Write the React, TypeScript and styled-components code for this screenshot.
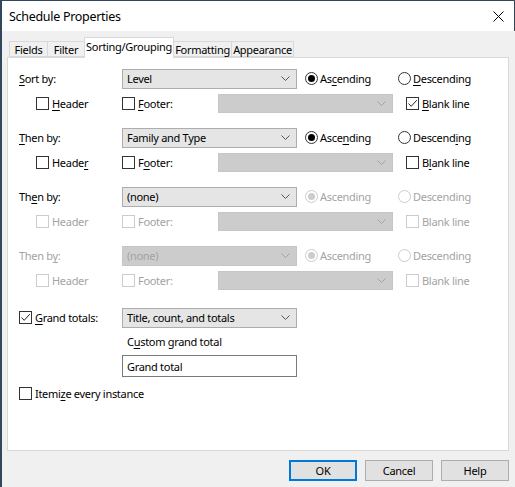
import React from "react";
import styled, { createGlobalStyle } from "styled-components";

const GlobalStyle = createGlobalStyle`
  html, body {
    margin: 0;
    padding: 0;
    background: #f0f0f0;
  }
  body {
    font-family: "Noto Sans", "Open Sans", sans-serif;
    font-size: 11px;
    letter-spacing: -0.3px;
    color: #000;
  }
`;

const Window = styled.div`
  width: 515px;
  height: 487px;
  box-sizing: border-box;
  background: #f0f0f0;
  border-left: 2px solid #33475c;
  display: flex;
  flex-direction: column;
`;

const TitleBar = styled.div`
  height: 31px;
  background: #fff;
  border-top: 1px solid #33475c;
  border-right: 1px solid #33475c;
  display: flex;
  align-items: center;
  justify-content: space-between;
  padding: 0 10px 0 7px;
  box-sizing: border-box;
`;

const Title = styled.div`
  font-size: 12.5px;
  letter-spacing: -0.3px;
`;

const Body = styled.div`
  flex: 1;
  display: flex;
  flex-direction: column;
  padding: 6px 6px 0 5px;
`;

const TabRow = styled.div`
  display: flex;
  align-items: flex-end;
  height: 20px;
  padding-left: 3px;
`;

const Tab = styled.div<{ $active?: boolean; $w: number }>`
  width: ${({ $w }) => $w}px;
  height: ${({ $active }) => ($active ? 21 : 16)}px;
  box-sizing: border-box;
  border: 1px solid #d9d9d9;
  border-bottom: ${({ $active }) => ($active ? "none" : "1px solid #d9d9d9")};
  margin-left: -1px;
  background: ${({ $active }) => ($active ? "#fff" : "#f0f0f0")};
  display: flex;
  align-items: center;
  justify-content: center;
  position: relative;
  z-index: ${({ $active }) => ($active ? 1 : 0)};
  padding-bottom: ${({ $active }) => ($active ? 4 : 0)}px;
  margin-bottom: ${({ $active }) => ($active ? -1 : 0)}px;
  white-space: nowrap;
`;

const Panel = styled.div`
  width: 502px;
  height: 394px;
  box-sizing: border-box;
  background: #fff;
  border: 1px solid #d9d9d9;
  padding: 8px 0 0 11px;
  display: flex;
  flex-direction: column;
`;

const Group = styled.div`
  display: flex;
  flex-direction: column;
  margin-bottom: 9px;
`;

const Row = styled.div<{ $mt?: number }>`
  height: 25px;
  margin-top: ${({ $mt }) => $mt ?? 0}px;
  display: flex;
  align-items: center;
`;

const Cell = styled.div<{ $w?: number; $pl?: number }>`
  width: ${({ $w }) => ($w ? `${$w}px` : "auto")};
  padding-left: ${({ $pl }) => $pl ?? 0}px;
  box-sizing: border-box;
  display: flex;
  align-items: center;
  flex-shrink: 0;
`;

const Label = styled.span<{ $disabled?: boolean }>`
  color: ${({ $disabled }) => ($disabled ? "#a3a3a3" : "#000")};
  white-space: nowrap;
  u {
    text-underline-offset: 2px;
  }
`;

const Combo = styled.div<{ $w: number; $h?: number; $disabled?: boolean; $dark?: boolean }>`
  width: ${({ $w }) => $w}px;
  height: ${({ $h }) => $h ?? 20}px;
  box-sizing: border-box;
  border: 1px solid ${({ $dark }) => ($dark ? "#c6c6c6" : "#adadad")};
  background: ${({ $dark }) => ($dark ? "#cccccc" : "#e5e5e5")};
  display: flex;
  align-items: center;
  justify-content: space-between;
  padding: 0 6px 0 4px;
  color: ${({ $disabled }) => ($disabled ? "#a3a3a3" : "#000")};
`;

const Chevron = ({ color }: { color: string }) => (
  <svg width="9" height="5" viewBox="0 0 9 5">
    <path d="M0.5 0.5 L4.5 4.5 L8.5 0.5" fill="none" stroke={color} strokeWidth="1" />
  </svg>
);

const Box = styled.span<{ $disabled?: boolean }>`
  width: 13px;
  height: 13px;
  box-sizing: border-box;
  border: 1px solid ${({ $disabled }) => ($disabled ? "#cccccc" : "#333")};
  background: #fff;
  display: inline-flex;
  align-items: center;
  justify-content: center;
  margin-right: 3px;
  flex-shrink: 0;
`;

const Circle = styled.span<{ $disabled?: boolean }>`
  width: 13px;
  height: 13px;
  box-sizing: border-box;
  border-radius: 50%;
  border: 1px solid ${({ $disabled }) => ($disabled ? "#cccccc" : "#333")};
  background: #fff;
  display: inline-flex;
  align-items: center;
  justify-content: center;
  margin-right: 2px;
  flex-shrink: 0;
`;

const Dot = styled.span<{ $disabled?: boolean }>`
  width: 7px;
  height: 7px;
  border-radius: 50%;
  background: ${({ $disabled }) => ($disabled ? "#cccccc" : "#000")};
`;

const Check = () => (
  <svg width="11" height="11" viewBox="0 0 11 11">
    <path d="M1.5 5.5 L4.2 8.3 L9.8 2.2" fill="none" stroke="#222" strokeWidth="1" />
  </svg>
);

const CheckBox = ({
  checked,
  disabled,
  children,
}: {
  checked?: boolean;
  disabled?: boolean;
  children: React.ReactNode;
}) => (
  <Cell>
    <Box $disabled={disabled}>{checked && <Check />}</Box>
    <Label $disabled={disabled}>{children}</Label>
  </Cell>
);

const Radio = ({
  checked,
  disabled,
  children,
}: {
  checked?: boolean;
  disabled?: boolean;
  children: React.ReactNode;
}) => (
  <Cell>
    <Circle $disabled={disabled}>{checked && <Dot $disabled={disabled} />}</Circle>
    <Label $disabled={disabled}>{children}</Label>
  </Cell>
);

const Caption = styled.div`
  height: 23px;
  display: flex;
  align-items: center;
  padding-left: 108px;
`;

const TextBox = styled.div`
  width: 175px;
  height: 22px;
  margin: 2px 0 0 103px;
  box-sizing: border-box;
  border: 1px solid #7a7a7a;
  display: flex;
  align-items: center;
  padding-left: 4px;
`;

const Footer = styled.div`
  display: flex;
  justify-content: flex-end;
  gap: 8px;
  padding: 9px 0 0;
`;

const Button = styled.div<{ $default?: boolean }>`
  width: 68px;
  height: 21px;
  box-sizing: border-box;
  border: ${({ $default }) => ($default ? "2px solid #0078d7" : "1px solid #adadad")};
  background: #e1e1e1;
  display: flex;
  align-items: center;
  justify-content: center;
`;

type GroupDef = {
  label: React.ReactNode;
  value: string;
  mode: "on" | "half" | "off";
  header: React.ReactNode;
  footer: React.ReactNode;
  asc: React.ReactNode;
  desc: React.ReactNode;
  blank: React.ReactNode;
  blankChecked?: boolean;
};

const groups: GroupDef[] = [
  {
    label: <><u>S</u>ort by:</>,
    value: "Level",
    mode: "on",
    header: <><u>H</u>eader</>,
    footer: <><u>F</u>ooter:</>,
    asc: <>As<u>c</u>ending</>,
    desc: <><u>D</u>escending</>,
    blank: <><u>B</u>lank line</>,
    blankChecked: true,
  },
  {
    label: <><u>T</u>hen by:</>,
    value: "Family and Type",
    mode: "on",
    header: <>Heade<u>r</u></>,
    footer: <>F<u>o</u>oter:</>,
    asc: <>Asce<u>n</u>ding</>,
    desc: <>Descend<u>i</u>ng</>,
    blank: <>B<u>l</u>ank line</>,
  },
  {
    label: <>Th<u>e</u>n by:</>,
    value: "(none)",
    mode: "half",
    header: "Header",
    footer: "Footer:",
    asc: "Ascending",
    desc: "Descending",
    blank: "Blank line",
  },
  {
    label: <>Then b<u>y</u>:</>,
    value: "(none)",
    mode: "off",
    header: "Header",
    footer: "Footer:",
    asc: "Ascending",
    desc: "Descending",
    blank: "Blank line",
  },
];

const SortGroup = ({ g }: { g: GroupDef }) => {
  const on = g.mode === "on";
  const off = g.mode === "off";
  return (
    <Group>
      <Row>
        <Cell $w={103}>
          <Label $disabled={off}>{g.label}</Label>
        </Cell>
        <Combo $w={175} $disabled={off} $dark={off}>
          <span>{g.value}</span>
          <Chevron color={off ? "#a3a3a3" : "#555"} />
        </Combo>
        <Cell $w={101} $pl={8}>
          <Radio checked disabled={!on}>{g.asc}</Radio>
        </Cell>
        <Radio disabled={!on}>{g.desc}</Radio>
      </Row>
      <Row>
        <Cell $w={103} $pl={17}>
          <CheckBox disabled={!on}>{g.header}</CheckBox>
        </Cell>
        <Cell $w={96}>
          <CheckBox disabled={!on}>{g.footer}</CheckBox>
        </Cell>
        <Combo $w={175} $h={19} $disabled $dark>
          <span />
          <Chevron color="#a3a3a3" />
        </Combo>
        <Cell $pl={13}>
          <CheckBox checked={g.blankChecked} disabled={!on}>
            {g.blank}
          </CheckBox>
        </Cell>
      </Row>
    </Group>
  );
};

const CloseIcon = () => (
  <svg width="11" height="11" viewBox="0 0 11 11">
    <path d="M0.5 0.5 L10.5 10.5 M10.5 0.5 L0.5 10.5" stroke="#000" strokeWidth="1" />
  </svg>
);

export default function App() {
  return (
    <>
      <GlobalStyle />
      <Window>
        <TitleBar>
          <Title>Schedule Properties</Title>
          <CloseIcon />
        </TitleBar>
        <Body>
          <TabRow>
            <Tab $w={39}>Fields</Tab>
            <Tab $w={38}>Filter</Tab>
            <Tab $w={90} $active>Sorting/Grouping</Tab>
            <Tab $w={59}>Formatting</Tab>
            <Tab $w={63}>Appearance</Tab>
          </TabRow>
          <Panel>
            {groups.map((g, i) => (
              <SortGroup key={i} g={g} />
            ))}
            <Row $mt={3}>
              <Cell $w={103}>
                <CheckBox checked>
                  <u>G</u>rand totals:
                </CheckBox>
              </Cell>
              <Combo $w={175}>
                <span>Title, count, and totals</span>
                <Chevron color="#555" />
              </Combo>
            </Row>
            <Caption>
              <Label>
                C<u>u</u>stom grand total
              </Label>
            </Caption>
            <TextBox>Grand total</TextBox>
            <Row $mt={4}>
              <CheckBox>
                Itemi<u>z</u>e every instance
              </CheckBox>
            </Row>
          </Panel>
          <Footer>
            <Button $default>OK</Button>
            <Button>Cancel</Button>
            <Button>Help</Button>
          </Footer>
        </Body>
      </Window>
    </>
  );
}
